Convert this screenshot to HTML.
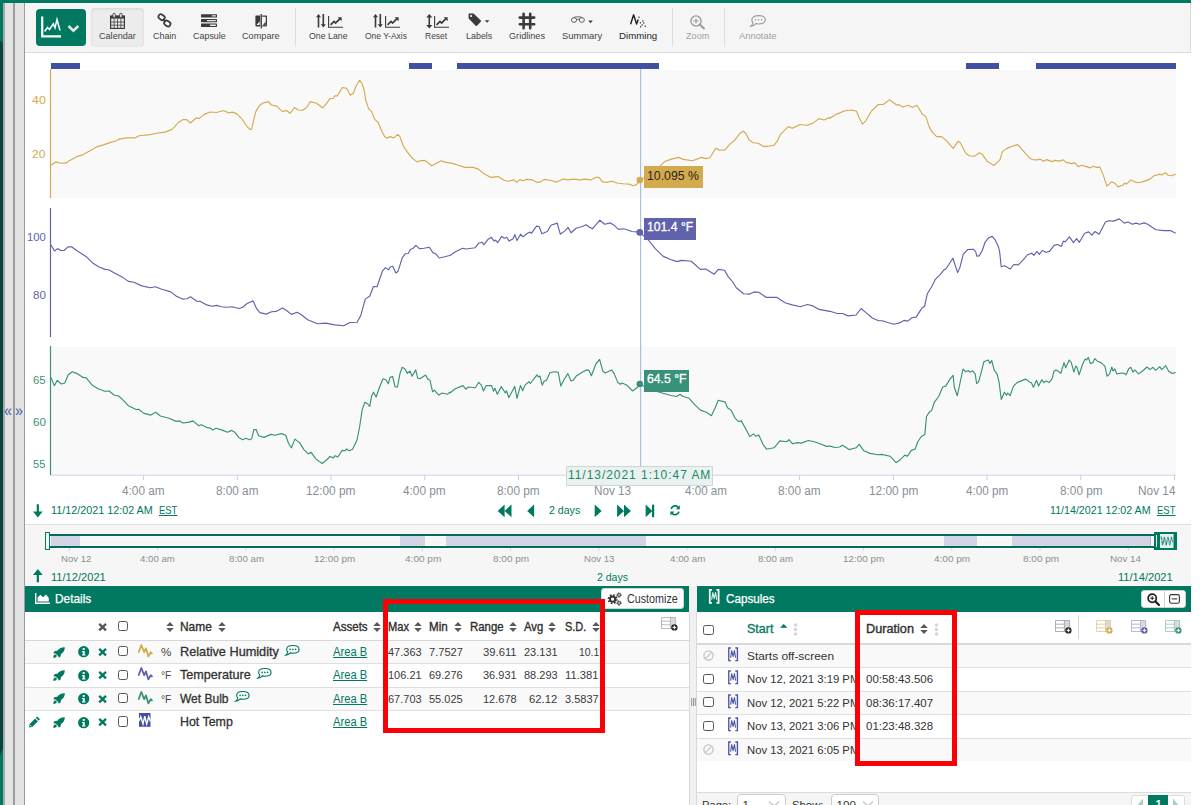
<!DOCTYPE html>
<html lang="en"><head><meta charset="utf-8"><title>Trend</title>
<style>
html,body{margin:0;padding:0;background:#fff;}
body{width:1201px;height:805px;position:relative;overflow:hidden;font-family:"Liberation Sans", sans-serif;}
#app div,#app svg,#app span.t{position:absolute;}
#app{position:absolute;left:0;top:0;width:1201px;height:805px;overflow:hidden;}
span.t{white-space:pre;line-height:1;transform-origin:0 0;display:block;}
svg{overflow:visible;}
</style></head><body><div id="app">
<div style="left:0px;top:0px;width:1191px;height:3px;background:#007960;"></div><div style="left:0px;top:0px;width:3px;height:805px;background:#007960;"></div><svg style="left:0;top:0" width="4" height="805"><path d="M0 41 Q3 41 3 45 L3 748 L0 756 Z" fill="#04473a"/></svg><div style="left:3px;top:3px;width:22px;height:802px;background:#e3e3e3;"></div><div style="left:3px;top:3px;width:1.5px;height:802px;background:#a8a8a8;"></div><div style="left:13px;top:3px;width:2px;height:802px;background:#9c9c9c;"></div><div style="left:23.8px;top:3px;width:1.2px;height:802px;background:#9c9c9c;"></div><div style="left:25px;top:3px;width:1166px;height:49px;background:#f5f5f5;border-bottom:1px solid #dcdcdc;border-right:1px solid #dcdcdc;box-sizing:border-box;height:50px;"></div><div style="left:36px;top:9px;width:50px;height:37px;background:#007960;border-radius:4px;"></div><svg style="left:41px;top:16px" width="42" height="24" viewBox="0 0 42 24"><path d="M1.2 0.5 V20.3 H20" fill="none" stroke="#fff" stroke-width="2.2"/><path d="M3.6 15.5 L6.5 11.5 L8.5 13.5 L12.3 7.8 L14 11.8 L16 3.6 L19 14.5" fill="none" stroke="#fff" stroke-width="1.5" stroke-linejoin="miter"/><path d="M27.5 10 L32.4 14.6 L37.3 10" fill="none" stroke="#e4e4e4" stroke-width="2.6"/></svg><div style="left:91px;top:8px;width:52.5px;height:38.5px;background:#ececec;border-radius:4px;box-shadow:inset 0 1px 3px rgba(0,0,0,.10);"></div><svg style="left:110px;top:13px" width="15" height="16" viewBox="0 0 15 16"><rect x="0.6" y="3" width="13.8" height="12.4" fill="none" stroke="#3a3a3a" stroke-width="1.2"/><rect x="0.6" y="3" width="13.8" height="2.6" fill="#3a3a3a"/><path d="M0.6 9H14.4M0.6 12.2H14.4M4.1 5.6V15.4M7.5 5.6V15.4M10.9 5.6V15.4" stroke="#3a3a3a" stroke-width="0.8" fill="none"/><rect x="2.9" y="0.3" width="2.4" height="4.2" rx="1.1" fill="#f0f0f0" stroke="#3a3a3a" stroke-width="0.9"/><rect x="9.7" y="0.3" width="2.4" height="4.2" rx="1.1" fill="#f0f0f0" stroke="#3a3a3a" stroke-width="0.9"/></svg><div style="left:294.5px;top:8px;width:1px;height:38.5px;background:#dedede;"></div><div style="left:671.6px;top:8px;width:1px;height:38.5px;background:#dedede;"></div><div style="left:724.4px;top:8px;width:1px;height:38.5px;background:#dedede;"></div><svg style="left:157px;top:13px" width="15" height="15" viewBox="0 0 15 15"><g fill="none" stroke="#3a3a3a" stroke-width="1.7"><rect x="-3.3" y="-2.4" width="6.6" height="4.8" rx="2.4" transform="translate(4.6 4.2) rotate(35)"/><rect x="-3.3" y="-2.4" width="6.6" height="4.8" rx="2.4" transform="translate(10.3 10.5) rotate(35)"/><path d="M6.3 5.9 L8.7 8.9"/></g></svg><svg style="left:201px;top:14px" width="16" height="13" viewBox="0 0 16 13"><g fill="#3a3a3a"><rect x="0" y="0.2" width="16" height="3.3" rx="0.6"/><rect x="0" y="4.9" width="16" height="3.3" rx="0.6"/><rect x="0" y="9.6" width="16" height="3.3" rx="0.6"/></g><g fill="#e8e8e8"><rect x="10.8" y="1.2" width="4.2" height="1.3" rx="0.6"/><rect x="5.8" y="5.9" width="9.2" height="1.3" rx="0.6"/><rect x="8.8" y="10.6" width="6.2" height="1.3" rx="0.6"/></g></svg><svg style="left:254.5px;top:14px" width="13" height="15" viewBox="0 0 13 15"><path d="M5.2 1.6 H1.2 Q0.4 1.6 0.4 2.4 V11.6 Q0.4 12.4 1.2 12.4 H5.2 Z" fill="#3a3a3a"/><path d="M1.6 11 L4.6 7.2 V11 Z" fill="#f5f5f5"/><path d="M7.3 1.6 H11.2 Q12 1.6 12 2.4 V11.6 Q12 12.4 11.2 12.4 H7.3 V11.2 H10.8 V2.8 H7.3 Z" fill="#3a3a3a"/><path d="M8 11 L10.6 7.6 V11 Z" fill="#3a3a3a"/><rect x="5.6" y="0" width="1.3" height="14.4" fill="#3a3a3a"/></svg><svg style="left:316.3px;top:14.4px" width="10" height="14" viewBox="0 0 10 14"><g fill="#3a3a3a"><path d="M2.5 0 L5 3.3 H3.3 V13.6 H1.7 V3.3 H0 Z"/><path d="M7.3 13.6 L4.8 10.3 H6.5 V0 H8.1 V10.3 H9.8 Z"/></g></svg><svg style="left:328px;top:15.8px" width="15" height="12" viewBox="0 0 15 12"><path d="M0.6 0 V11.2 H15" fill="none" stroke="#3a3a3a" stroke-width="1.1"/><path d="M2.6 8.8 L6 5.4 L7.6 7 L12 2.6" fill="none" stroke="#3a3a3a" stroke-width="1.7"/><path d="M9.6 1.2 H13.6 V5.2 Z" fill="#3a3a3a"/></svg><svg style="left:373.3px;top:14.4px" width="10" height="14" viewBox="0 0 10 14"><g fill="#3a3a3a"><path d="M2.5 0 L5 3.3 H3.3 V13.6 H1.7 V3.3 H0 Z"/><path d="M7.3 13.6 L4.8 10.3 H6.5 V0 H8.1 V10.3 H9.8 Z"/></g></svg><svg style="left:385.2px;top:15.8px" width="15" height="12" viewBox="0 0 15 12"><path d="M0.6 0 V11.2 H15" fill="none" stroke="#3a3a3a" stroke-width="1.1"/><path d="M2.6 8.8 L6 5.4 L7.6 7 L12 2.6" fill="none" stroke="#3a3a3a" stroke-width="1.7"/><path d="M9.6 1.2 H13.6 V5.2 Z" fill="#3a3a3a"/></svg><svg style="left:425.6px;top:14px" width="7" height="15" viewBox="0 0 7 15"><g fill="#3a3a3a"><path d="M3.3 0 L6.4 3.6 H4.1 V11 H6.4 L3.3 14.6 L0.2 11 H2.5 V3.6 H0.2 Z"/></g></svg><svg style="left:434.4px;top:15.8px" width="15" height="12" viewBox="0 0 15 12"><path d="M0.6 0 V11.2 H15" fill="none" stroke="#3a3a3a" stroke-width="1.1"/><path d="M2.6 8.8 L6 5.4 L7.6 7 L12 2.6" fill="none" stroke="#3a3a3a" stroke-width="1.7"/><path d="M9.6 1.2 H13.6 V5.2 Z" fill="#3a3a3a"/></svg><svg style="left:468px;top:13px" width="22" height="14" viewBox="0 0 22 14"><path d="M0.6 0.5 H5.6 L12.8 7.6 Q13.4 8.2 12.8 8.8 L8.9 12.7 Q8.3 13.3 7.7 12.7 L0.6 5.6 Z" fill="#3a3a3a"/><circle cx="3.1" cy="3" r="1.1" fill="#f5f5f5"/><path d="M16.8 7.2 H21.4 L19.1 9.8 Z" fill="#3a3a3a"/></svg><svg style="left:519.3px;top:13px" width="16" height="16" viewBox="0 0 16 16"><path d="M4.6 0.8 V15.2 M11.2 0.8 V15.2 M0.8 4.6 H15.2 M0.8 11.2 H15.2" stroke="#3a3a3a" stroke-width="2.6" stroke-linecap="round" fill="none"/></svg><svg style="left:571px;top:15.5px" width="23" height="8" viewBox="0 0 23 8"><g fill="none" stroke="#555" stroke-width="0.9"><ellipse cx="3" cy="4" rx="2.6" ry="2.3"/><ellipse cx="10.8" cy="4" rx="2.6" ry="2.3"/><path d="M2.6 1.7 Q4 0.5 6.9 0.9 Q9.8 0.5 11.2 1.7 M5.6 3.6 Q6.9 2.8 8.2 3.6"/></g><path d="M17.3 4.6 H21.8 L19.55 7.2 Z" fill="#3a3a3a"/></svg><svg style="left:629.6px;top:14px" width="17" height="14" viewBox="0 0 17 14"><path d="M0.6 10.2 L3.6 0.8 L6.6 10 L8.2 5.4" fill="none" stroke="#1e1e1e" stroke-width="1.4" stroke-linejoin="round"/><g fill="#1e1e1e"><rect x="8.4" y="2.6" width="1.2" height="1.2"/><rect x="9.8" y="8.2" width="1.2" height="1.2"/><rect x="11.6" y="10.4" width="1.2" height="1.2"/><rect x="13.2" y="8.4" width="1.2" height="1.2"/><rect x="10" y="12.2" width="1.2" height="1.2"/><rect x="14.6" y="11.6" width="1.2" height="1.2"/><rect x="12.2" y="6.4" width="1.2" height="1.2"/></g></svg><svg style="left:690.3px;top:14.7px" width="15" height="14" viewBox="0 0 15 14"><circle cx="6" cy="6" r="5.1" fill="none" stroke="#9a9a9a" stroke-width="1.4"/><path d="M6 3.4V8.6M3.4 6H8.6" stroke="#9a9a9a" stroke-width="1.1"/><path d="M9.8 9.6 L14 13.4" stroke="#9a9a9a" stroke-width="2" stroke-linecap="round"/></svg><svg style="left:749.9px;top:15px" width="16" height="12" viewBox="0 0 16 12"><path d="M8.6 0.6 C12.6 0.6 15.4 2.4 15.4 4.8 C15.4 7.2 12.6 9 8.6 9 C7.6 9 6.6 8.9 5.8 8.6 C4.6 10 2.6 11 0.8 11.2 C2 10.2 2.8 9 3 7.6 C2.2 6.8 1.8 5.8 1.8 4.8 C1.8 2.4 4.6 0.6 8.6 0.6 Z" fill="none" stroke="#9a9a9a" stroke-width="1.1"/><circle cx="5.6" cy="4.8" r="0.8" fill="#9a9a9a"/><circle cx="8.6" cy="4.8" r="0.8" fill="#9a9a9a"/><circle cx="11.6" cy="4.8" r="0.8" fill="#9a9a9a"/></svg><div style="left:51px;top:63px;width:28.700000000000003px;height:6px;background:#4051a3;"></div><div style="left:408.9px;top:63px;width:23.0px;height:6px;background:#4051a3;"></div><div style="left:456.9px;top:63px;width:201.89999999999998px;height:6px;background:#4051a3;"></div><div style="left:966.2px;top:63px;width:33.09999999999991px;height:6px;background:#4051a3;"></div><div style="left:1036.1px;top:63px;width:139.9000000000001px;height:6px;background:#4051a3;"></div><div style="left:51px;top:70px;width:1125px;height:128px;background:#f9f9f9;"></div><div style="left:51px;top:346.5px;width:1125px;height:128px;background:#f9f9f9;"></div><svg style="left:0;top:0" width="1201" height="530" viewBox="0 0 1201 530"><path d="M50 475.2 H1176" stroke="#c9d4ec" stroke-width="1" fill="none"/><path d="M143.6 475 V480 M237.3 475 V480 M331.0 475 V480 M424.8 475 V480 M518.5 475 V480 M612.2 475 V480 M705.9 475 V480 M799.6 475 V480 M893.4 475 V480 M987.1 475 V480 M1080.8 475 V480 M1174.5 475 V480 " stroke="#c3cfe8" stroke-width="1" fill="none"/><path d="M640.6 69 V466" stroke="#a9bfe0" stroke-width="1.2" fill="none"/><path d="M50.5 69 V198" stroke="#d4aa4f" stroke-width="1.2"/><path d="M50.5 208 V337" stroke="#6062ab" stroke-width="1.2"/><path d="M50.5 346 V475" stroke="#3a917a" stroke-width="1.2"/><polyline points="50.8,165.3 55.8,161.9 60.8,163.3 65.8,162.9 71.6,159.6 78.3,156.1 83.3,154.6 90.0,150.8 96.6,146.9 103.3,144.9 110.0,142.6 116.6,140.8 119.1,139.1 126.6,137.9 134.9,137.9 139.1,135.8 149.9,134.6 156.6,133.3 164.9,132.1 171.6,129.6 174.9,126.6 178.2,122.5 183.2,119.6 186.6,119.6 190.4,123.0 196.5,117.8 199.0,118.6 204.0,114.6 209.9,112.0 216.5,112.5 222.4,110.8 225.7,111.3 228.2,113.0 232.3,112.1 236.5,113.6 241.5,118.3 246.5,125.8 249.0,128.6 250.0,129.5 251.7,129.1 253.3,121.6 255.8,111.6 259.2,105.8 262.5,103.3 268.3,101.6 271.6,105.0 276.6,106.1 282.5,111.6 286.6,110.5 290.0,113.3 294.6,107.5 298.3,110.0 302.5,110.3 306.6,107.5 310.3,101.6 316.6,103.3 322.8,108.0 326.6,103.3 329.9,98.6 333.3,98.3 334.9,95.8 337.4,95.8 342.4,87.5 346.6,88.3 350.4,95.3 353.2,93.3 356.6,85.0 359.6,80.3 361.9,83.3 364.1,90.0 365.7,100.0 368.6,108.6 371.6,111.6 374.6,119.1 378.2,122.5 381.6,130.8 384.6,136.6 387.4,138.3 389.9,136.6 393.5,137.9 397.9,134.4 399.9,136.6 403.2,145.8 407.4,152.1 412.4,158.3 417.4,162.1 419.9,160.8 424.9,160.4 431.8,165.8 436.5,163.3 441.2,160.8 445.7,162.4 449.5,162.9 450.0,162.9 453.3,163.6 458.3,165.3 465.0,167.4 473.3,167.4 478.3,169.1 483.3,173.2 490.8,177.4 498.3,176.6 504.1,180.2 508.3,181.2 514.1,179.9 516.6,182.4 519.9,179.6 523.3,180.7 526.6,179.4 532.4,179.9 537.4,182.4 540.8,181.9 544.1,179.4 549.9,180.2 556.6,182.1 563.2,179.1 568.2,179.9 573.2,179.1 579.9,179.9 584.9,179.1 590.7,179.9 595.7,177.4 599.0,177.4 602.4,181.9 606.5,182.4 611.5,181.2 618.2,183.2 623.2,183.7 629.0,184.1 633.2,185.7 636.5,184.6 639.8,180.4 640.0,179.9 646.7,176.6 653.3,171.6 659.6,166.3 665.0,161.3 671.6,159.1 678.3,157.4 683.3,159.4 692.4,160.8 701.6,157.4 705.8,158.6 709.9,157.8 715.8,148.3 719.9,150.3 724.9,149.9 729.9,144.1 734.1,140.8 739.9,133.3 743.2,131.3 745.7,133.3 749.1,139.9 753.2,142.8 758.2,143.3 763.2,146.3 768.2,146.3 774.0,145.3 777.4,140.8 780.7,134.1 788.2,126.6 792.4,128.3 799.9,124.5 806.5,125.3 812.3,123.6 819.0,118.6 824.0,120.0 829.5,117.5 830.0,118.3 836.7,114.1 845.0,110.8 851.6,110.0 856.6,111.3 859.1,117.5 862.5,124.1 865.8,120.8 871.6,110.8 878.3,104.5 883.3,104.5 889.6,99.6 893.3,102.5 896.6,105.0 899.1,104.6 902.4,107.0 908.3,105.3 912.4,107.5 916.9,105.3 922.4,114.1 925.8,116.6 929.1,126.6 932.4,132.4 936.6,136.6 941.6,136.6 946.6,140.8 953.2,148.3 958.2,141.1 960.7,143.3 965.7,153.3 969.1,155.8 974.9,156.1 979.5,152.8 982.4,154.6 987.4,161.6 994.0,165.4 999.9,159.9 1002.4,151.6 1006.5,148.6 1012.3,146.3 1017.8,144.6 1023.2,150.8 1029.8,158.3 1032.5,159.6 1037.5,159.9 1040.0,159.1 1043.6,161.3 1046.6,159.6 1051.6,161.6 1055.0,160.4 1059.1,161.1 1063.3,159.9 1065.8,162.1 1071.6,163.6 1074.9,162.9 1078.3,166.6 1081.6,165.3 1086.6,166.6 1089.9,167.9 1093.3,166.3 1096.6,167.4 1099.9,167.1 1103.2,174.9 1106.9,186.1 1111.6,181.9 1114.9,183.2 1117.9,186.9 1122.4,185.2 1124.9,183.2 1126.6,184.1 1130.7,179.9 1134.1,181.6 1138.2,182.7 1143.2,181.6 1149.9,179.1 1154.0,175.7 1159.9,174.1 1161.5,174.9 1165.4,172.7 1168.2,175.2 1171.5,175.7 1175.7,174.1" fill="none" stroke="#d4aa4f" stroke-width="1.15" stroke-linejoin="round"/><polyline points="50.9,244.7 54.5,251.0 57.6,248.6 60.8,250.5 64.1,250.5 68.0,246.8 71.6,246.8 77.0,250.8 86.0,256.4 92.3,262.7 98.6,266.7 105.0,269.4 108.6,269.7 114.9,273.3 122.1,276.9 128.4,281.4 133.8,282.3 141.9,285.9 150.0,287.7 155.4,286.8 161.7,289.2 170.7,291.9 176.1,296.0 182.4,299.1 186.9,298.7 190.5,296.8 196.8,301.3 200.5,301.4 206.8,304.9 212.2,306.3 216.7,305.4 221.2,306.8 226.6,307.2 232.0,306.7 239.2,308.5 242.8,307.2 246.4,304.0 249.6,302.2 250.0,302.2 253.1,300.9 256.3,308.1 259.9,312.6 266.2,314.1 271.6,311.7 276.1,311.4 282.4,308.1 286.9,310.8 291.4,314.4 297.2,312.3 301.4,314.8 307.7,319.8 317.6,323.8 325.7,323.1 334.7,324.9 343.7,325.8 350.0,322.5 357.2,322.2 360.8,315.3 365.3,299.1 369.8,296.0 373.4,286.5 377.0,286.8 382.4,271.2 385.5,267.6 388.4,269.9 390.2,267.0 392.7,266.3 395.9,273.0 398.1,271.2 402.3,257.7 405.3,253.7 408.2,253.5 410.4,249.5 413.1,248.3 415.8,245.4 419.4,248.6 423.9,248.3 429.3,247.2 432.9,252.6 435.6,253.7 439.2,258.0 444.6,256.8 449.6,255.5 450.0,255.5 455.4,251.7 462.6,248.3 466.2,249.0 475.2,247.7 478.8,243.2 482.1,242.3 483.9,244.7 487.8,239.6 491.4,237.3 494.1,241.1 495.6,240.0 497.7,242.7 501.7,236.4 504.4,238.2 506.8,237.3 509.1,241.1 513.1,238.7 514.9,234.6 517.0,240.5 520.6,234.2 523.0,236.9 527.5,233.3 530.2,232.1 531.4,233.3 536.5,226.1 539.2,226.7 541.9,233.7 547.3,231.5 550.9,225.2 557.2,223.1 560.3,234.2 565.3,230.6 568.0,227.4 571.1,232.8 576.1,228.3 582.4,226.5 586.0,224.7 588.7,226.7 592.3,228.8 599.9,220.2 604.6,224.3 610.4,222.9 614.0,225.2 618.5,229.4 623.9,228.8 632.0,231.5 639.2,232.1 639.9,232.4 648.9,240.5 655.2,248.6 663.3,256.4 670.5,259.5 677.2,261.6 681.4,260.4 691.3,261.3 700.3,269.4 705.7,269.0 714.3,274.2 718.3,269.4 724.6,270.3 728.2,276.6 732.7,282.0 736.3,287.7 743.5,293.7 749.8,294.1 754.0,291.9 758.8,292.3 766.0,297.3 776.8,297.3 785.0,302.7 792.2,304.9 800.3,306.7 807.5,304.5 812.9,305.9 819.2,309.4 829.6,311.4 830.0,311.2 837.2,313.5 842.6,313.5 848.0,315.9 856.1,315.0 861.0,308.5 866.0,312.6 872.3,318.0 878.6,320.7 882.3,320.7 887.7,322.5 894.0,324.3 899.4,322.9 903.9,320.4 907.8,321.1 912.0,317.7 916.1,317.1 921.9,308.1 924.6,306.3 927.3,293.7 931.8,286.5 935.4,279.3 939.9,274.8 943.5,270.3 946.2,268.5 952.9,258.2 957.6,272.6 960.1,266.7 963.3,254.1 967.8,249.5 973.2,249.2 975.6,251.4 976.8,256.2 979.2,255.9 982.3,250.5 985.0,242.3 988.6,237.8 992.2,236.4 994.9,239.6 998.5,246.8 999.7,252.3 1001.2,266.7 1004.4,265.8 1007.5,267.6 1010.2,269.0 1013.8,264.5 1018.3,264.9 1022.8,260.4 1027.3,255.0 1030.0,253.7 1031.5,253.2 1033.9,255.3 1036.9,251.4 1039.3,254.4 1042.3,250.5 1045.9,252.3 1049.5,251.4 1054.1,245.4 1057.7,244.5 1061.3,246.5 1063.4,241.1 1065.2,241.8 1069.4,236.9 1073.5,242.7 1076.6,238.7 1079.3,242.3 1084.7,233.3 1088.6,231.9 1091.9,235.1 1095.0,231.5 1099.1,234.2 1105.4,222.0 1109.0,220.7 1113.5,221.1 1119.3,218.9 1124.3,223.1 1127.9,222.0 1132.4,224.3 1136.0,223.1 1139.6,224.3 1144.1,222.9 1147.7,224.3 1155.9,229.7 1164.0,230.6 1170.3,230.6 1175.7,233.3" fill="none" stroke="#6062ab" stroke-width="1.15" stroke-linejoin="round"/><polyline points="50.9,377.4 54.3,385.6 57.3,380.3 61.3,384.0 64.8,383.0 68.3,374.8 72.3,371.7 77.8,373.9 83.0,377.4 86.2,377.9 92.6,385.6 98.7,389.0 104.8,391.3 109.1,391.0 114.3,395.3 118.7,396.0 123.9,400.9 128.3,405.7 136.1,409.6 138.7,409.2 143.9,413.4 150.9,415.1 155.7,412.2 160.4,416.0 169.1,418.3 176.1,421.4 179.6,420.9 183.0,423.0 189.1,422.1 193.0,420.9 198.7,425.7 201.3,424.7 207.4,427.8 210.0,427.8 212.6,430.1 216.1,428.3 222.2,430.1 227.4,432.2 231.7,430.4 234.7,432.2 238.7,437.4 242.7,439.7 245.7,438.3 249.7,439.7 250.0,439.7 251.7,438.8 253.8,429.6 256.1,429.6 258.7,435.7 263.9,437.4 270.9,434.4 275.2,435.3 281.3,433.6 285.7,435.3 288.6,443.5 291.4,447.8 294.9,439.1 299.6,442.6 303.9,449.6 308.3,453.9 310.9,452.2 316.1,459.1 322.2,463.5 326.5,460.0 330.0,456.5 333.5,457.9 335.2,455.7 337.8,457.0 342.2,450.4 344.8,450.8 346.5,449.0 349.1,450.8 352.6,449.2 357.0,440.0 359.6,427.0 362.2,409.6 364.8,402.3 367.4,403.5 369.7,406.4 371.7,395.7 373.5,392.2 376.1,397.0 379.6,387.0 383.0,378.8 386.0,379.7 388.3,383.8 390.0,377.4 392.6,376.5 395.2,387.0 397.5,387.0 399.9,373.9 402.2,367.3 404.8,368.7 407.4,373.4 410.0,371.0 412.1,376.2 415.7,369.9 417.8,378.3 420.4,378.6 425.7,375.1 427.7,379.1 430.0,380.3 432.6,391.8 434.3,390.1 438.7,395.1 442.2,393.0 447.4,394.3 449.7,392.2 450.0,393.0 455.2,388.7 463.0,385.6 465.7,389.2 468.3,387.0 475.2,387.8 478.7,382.3 481.7,385.6 483.4,391.0 486.2,385.6 491.7,385.6 493.5,391.3 494.9,388.3 497.3,394.3 501.3,386.6 505.3,393.0 506.5,390.8 508.8,397.7 514.7,386.4 517.0,398.3 520.4,385.6 522.7,390.8 525.1,384.9 529.1,381.7 530.3,383.5 537.0,374.8 538.3,377.0 539.9,376.0 542.2,385.2 543.9,381.4 546.5,380.3 550.0,372.5 555.2,371.7 558.2,372.2 560.8,386.1 563.9,379.7 567.9,373.6 570.9,380.9 573.1,380.3 576.6,375.7 582.2,372.2 586.5,369.9 589.1,370.4 591.4,375.7 596.1,363.5 599.6,359.5 603.0,371.3 605.1,373.0 611.7,369.9 614.3,373.9 617.8,382.6 620.4,384.3 622.2,383.1 627.4,385.6 632.6,391.0 637.0,387.8 639.6,384.3 647.4,387.8 659.6,392.2 670.0,395.3 676.6,396.5 680.1,394.3 683.0,396.5 689.1,398.3 695.2,405.2 700.4,410.1 706.5,412.2 711.4,415.7 715.2,407.8 718.3,400.3 725.3,402.1 727.4,407.8 730.9,409.9 735.2,418.3 738.7,421.7 741.3,420.9 745.7,428.7 749.7,436.5 753.5,433.9 755.6,436.2 758.7,435.1 763.0,444.3 766.5,449.2 774.0,447.8 779.9,440.9 786.5,441.7 789.1,439.7 792.6,443.8 797.0,442.6 801.3,443.1 808.3,440.5 814.3,441.7 821.3,444.3 826.5,446.4 829.7,446.1 830.0,446.1 835.2,447.5 839.6,447.0 842.5,445.2 849.1,449.6 856.1,447.8 859.2,444.3 863.9,450.8 870.0,453.4 877.8,454.8 881.8,454.4 890.0,456.2 896.1,462.6 900.4,459.7 904.8,455.1 907.4,456.2 911.4,450.4 915.2,449.0 917.8,441.7 921.3,436.5 924.8,434.4 926.5,416.5 928.8,412.7 931.7,410.4 934.3,402.3 938.7,396.5 942.7,387.0 945.7,386.1 950.0,379.1 953.1,375.3 954.3,387.0 957.3,395.7 963.0,369.0 965.7,371.8 968.3,370.4 970.0,372.2 972.6,370.8 975.2,373.9 976.6,383.5 978.7,381.7 981.3,372.2 983.9,361.7 988.3,360.0 990.0,363.5 991.7,360.5 994.3,370.4 997.0,373.9 999.0,381.7 1001.3,399.5 1004.4,392.2 1006.5,395.3 1007.7,393.0 1010.0,395.7 1013.5,386.1 1017.0,382.6 1021.3,380.9 1025.7,379.1 1030.0,382.3 1031.3,382.6 1033.4,387.3 1036.5,380.3 1038.6,386.1 1041.7,379.7 1043.8,382.6 1046.6,380.9 1049.0,382.6 1052.2,378.6 1053.9,371.3 1056.0,369.9 1058.3,371.3 1060.9,373.4 1064.0,362.6 1065.7,367.8 1069.2,360.0 1071.3,362.6 1073.9,372.2 1075.7,366.1 1076.9,367.0 1079.1,374.8 1082.6,364.3 1085.2,359.1 1086.6,360.0 1088.3,357.4 1090.4,363.5 1093.0,362.6 1094.8,358.6 1097.4,361.2 1100.9,362.6 1104.9,366.1 1107.0,376.2 1109.6,373.9 1111.8,367.0 1113.0,371.0 1114.8,369.0 1116.9,373.9 1121.7,373.0 1124.3,373.4 1126.1,374.8 1128.7,368.7 1130.8,367.3 1133.0,372.2 1134.8,369.9 1138.6,373.9 1142.6,371.0 1147.0,367.0 1149.9,369.6 1153.0,367.3 1155.7,370.4 1159.7,366.6 1161.7,369.6 1165.7,365.7 1168.7,371.3 1172.2,373.4 1175.7,372.5" fill="none" stroke="#3a917a" stroke-width="1.15" stroke-linejoin="round"/><circle cx="639.8" cy="180.1" r="3.3" fill="#d4aa4f"/><circle cx="639.8" cy="232.4" r="3.3" fill="#6062ab"/><circle cx="639.8" cy="384" r="3.3" fill="#3a917a"/></svg><div style="left:644.2px;top:166.3px;width:58.6px;height:21.4px;background:#d4aa4f;"></div><div style="left:644.1px;top:218px;width:51.7px;height:21.6px;background:#6062ab;"></div><div style="left:643.9px;top:369.9px;width:44.9px;height:21.9px;background:#3a917a;"></div><div style="left:565.9px;top:465.8px;width:147.2px;height:20.2px;background:#e9f2f0;border:1px solid #cfd6d4;box-sizing:border-box;"></div><svg style="left:33.2px;top:504px" width="9.7" height="13.4" viewBox="0 0 9.7 13.4"><path d="M3.75 0.2 H5.95 V7.4 H9.7 L4.85 13.4 L0 7.4 H3.75 Z" fill="#007960"/></svg><svg style="left:497px;top:504px" width="190" height="14" viewBox="0 0 190 14"><g fill="#007960"><path d="M0.7 6.9 L7.6 0.6 V13.2 Z M7.6 6.9 L14.5 0.6 V13.2 Z"/><path d="M30.2 6.9 L37.1 0.6 V13.2 Z"/><path d="M104.6 6.9 L97.7 0.6 V13.2 Z"/><path d="M133.9 6.9 L127 0.6 V13.2 Z M127 6.9 L120.1 0.6 V13.2 Z"/><path d="M155.4 6.9 L148.6 0.6 V13.2 Z"/><rect x="155" y="0.6" width="2.2" height="12.6"/></g><g fill="none" stroke="#007960" stroke-width="1.7"><path d="M174.2 5 A4 4 0 0 1 181.4 3.6"/><path d="M182 7.6 A4 4 0 0 1 174.8 9"/></g><path d="M182.8 1.2 V5.2 H178.8 Z M173.4 11.4 V7.4 H177.4 Z" fill="#007960"/></svg><div style="left:25px;top:524px;width:1166px;height:63px;background:#f6f6f6;border-top:1px solid #dedede;box-sizing:border-box;"></div><div style="left:47px;top:533px;width:1108px;height:16px;background:#fff;"></div><div style="left:48px;top:536.8px;width:1107px;height:8.4px;background:#f6f6f6;"></div><div style="left:50.5px;top:536px;width:29.299999999999997px;height:10px;background:#d3d5e7;"></div><div style="left:400.1px;top:536px;width:24.5px;height:10px;background:#d3d5e7;"></div><div style="left:446.2px;top:536px;width:199.40000000000003px;height:10px;background:#d3d5e7;"></div><div style="left:943.9px;top:536px;width:32.89999999999998px;height:10px;background:#d3d5e7;"></div><div style="left:1012px;top:536px;width:137.5px;height:10px;background:#d3d5e7;"></div><div style="left:48px;top:534px;width:1107px;height:2px;background:#006e55;"></div><div style="left:48px;top:546px;width:1107px;height:2px;background:#006e55;"></div><div style="left:45.2px;top:532.3px;width:4.8px;height:17.4px;background:#f3f7f5;border:1.3px solid #007960;box-sizing:border-box;"></div><div style="left:1149.6px;top:535.6px;width:1.4px;height:10px;background:#b9b9c4;"></div><div style="left:1153.9px;top:532.3px;width:23.2px;height:17.4px;background:#007960;"></div><div style="left:1156.2px;top:535px;width:1px;height:12px;background:#e8f3ef;"></div><svg style="left:1160.3px;top:534px" width="13.5" height="14" viewBox="0 0 13.5 12" preserveAspectRatio="none"><rect width="13.5" height="12" fill="#e6f1ee"/><path d="M1 2 L2.6 9.6 L4.4 2.6 L6.2 9.8 L8 2.4 L9.8 9.6 L11.4 2.4 L12.6 7" fill="none" stroke="#2a9076" stroke-width="1.1"/><path d="M1.2 6 L3.2 3 L5.2 8 L7.2 4 L9.2 8.4 L11.2 4 L12.4 6.4" fill="none" stroke="#9fc3d8" stroke-width="0.7"/></svg><svg style="left:0;top:547px" width="1201" height="6"><path d="M69.4 1 V3.9 M157.6 1 V3.9 M245.9 1 V3.9 M334.1 1 V3.9 M422.4 1 V3.9 M510.6 1 V3.9 M598.8 1 V3.9 M687.1 1 V3.9 M775.3 1 V3.9 M863.6 1 V3.9 M951.8 1 V3.9 M1040.0 1 V3.9 M1128.3 1 V3.9 " stroke="#cdd4ee" stroke-width="1" fill="none"/></svg><svg style="left:33.2px;top:569.2px" width="9.7" height="13.4" viewBox="0 0 9.7 13.4"><path transform="rotate(180 4.85 6.7)" d="M3.75 0.2 H5.95 V7.4 H9.7 L4.85 13.4 L0 7.4 H3.75 Z" fill="#007960"/></svg><div style="left:25px;top:585px;width:1166px;height:1px;background:#fff;"></div><div style="left:25px;top:586px;width:664px;height:26px;background:#007960;"></div><div style="left:689px;top:586px;width:8px;height:219px;background:#f1f1f1;"></div><div style="left:688.5px;top:612px;width:1px;height:193px;background:#d9d9d9;"></div><div style="left:696px;top:612px;width:1px;height:193px;background:#d9d9d9;"></div><svg style="left:34.7px;top:593px" width="15" height="11" viewBox="0 0 15 11"><path d="M0.7 0 V10.2 H15" fill="none" stroke="#fff" stroke-width="1.4"/><path d="M2.6 8.6 V4.4 L5.4 1.8 L8 4.2 L11 1.6 L13.8 5 V8.6 Z" fill="#fff"/></svg><div style="left:601.3px;top:588.2px;width:82.7px;height:21px;background:#fff;border-radius:3px;border:1px solid #cfd8d5;box-sizing:border-box;"></div><svg style="left:607.5px;top:591.5px" width="14" height="14" viewBox="0 0 14 14"><g fill="none" stroke="#333" ><circle cx="4.6" cy="7.2" r="2.6" stroke-width="2"/><circle cx="4.6" cy="7.2" r="4.3" stroke-width="1.5" stroke-dasharray="1.7 1.68"/><circle cx="11" cy="3" r="1.4" stroke-width="1"/><circle cx="11" cy="3" r="2.3" stroke-width="0.9" stroke-dasharray="0.9 0.9"/><circle cx="11" cy="11" r="1.4" stroke-width="1"/><circle cx="11" cy="11" r="2.3" stroke-width="0.9" stroke-dasharray="0.9 0.9"/></g></svg><div style="left:25px;top:639.6px;width:664px;height:1.6px;background:#d6d8dc;"></div><div style="left:25px;top:641px;width:664px;height:22.6px;background:#f9f9f9;"></div><div style="left:25px;top:688px;width:664px;height:22.6px;background:#f9f9f9;"></div><div style="left:25px;top:663.3px;width:664px;height:1px;background:#dddfe3;"></div><div style="left:25px;top:686.9px;width:664px;height:1px;background:#dddfe3;"></div><div style="left:25px;top:710.4px;width:664px;height:1px;background:#dddfe3;"></div><svg style="left:98.2px;top:622.9px" width="9.2" height="8.2" viewBox="0 0 9.2 8.2"><path d="M1.2 0.9 L8 7.3 M8 0.9 L1.2 7.3" stroke="#555" stroke-width="2.3" fill="none"/></svg><div style="left:117.6px;top:621.2px;width:10.2px;height:10.2px;border:1.2px solid #555;border-radius:2.4px;background:#fff;box-sizing:border-box;"></div><svg style="left:166.3px;top:621.7px" width="8" height="10" viewBox="0 0 8 10"><path d="M4 0 L7.8 4 H0.2 Z M4 10 L7.8 6 H0.2 Z" fill="#5a5a5a"/></svg><svg style="left:217.5px;top:621.7px" width="8" height="10" viewBox="0 0 8 10"><path d="M4 0 L7.8 4 H0.2 Z M4 10 L7.8 6 H0.2 Z" fill="#5a5a5a"/></svg><svg style="left:372.7px;top:621.7px" width="8" height="10" viewBox="0 0 8 10"><path d="M4 0 L7.8 4 H0.2 Z M4 10 L7.8 6 H0.2 Z" fill="#5a5a5a"/></svg><svg style="left:414.4px;top:621.7px" width="8" height="10" viewBox="0 0 8 10"><path d="M4 0 L7.8 4 H0.2 Z M4 10 L7.8 6 H0.2 Z" fill="#5a5a5a"/></svg><svg style="left:453.6px;top:621.7px" width="8" height="10" viewBox="0 0 8 10"><path d="M4 0 L7.8 4 H0.2 Z M4 10 L7.8 6 H0.2 Z" fill="#5a5a5a"/></svg><svg style="left:509.2px;top:621.7px" width="8" height="10" viewBox="0 0 8 10"><path d="M4 0 L7.8 4 H0.2 Z M4 10 L7.8 6 H0.2 Z" fill="#5a5a5a"/></svg><svg style="left:548.4px;top:621.7px" width="8" height="10" viewBox="0 0 8 10"><path d="M4 0 L7.8 4 H0.2 Z M4 10 L7.8 6 H0.2 Z" fill="#5a5a5a"/></svg><svg style="left:591.6px;top:621.7px" width="8" height="10" viewBox="0 0 8 10"><path d="M4 0 L7.8 4 H0.2 Z M4 10 L7.8 6 H0.2 Z" fill="#5a5a5a"/></svg><svg style="left:661px;top:617.4px" width="17" height="14" viewBox="0 0 17 14"><rect x="9.4" y="0.5" width="5.2" height="11" fill="#d9d9d9"/><path d="M0.5 0.5 H14.6 V11.5 H0.5 Z M0.5 4.2 H9.4 M0.5 7.8 H9.4 M9.4 0.5 V11.5" fill="none" stroke="#a9a9b4" stroke-width="0.8"/><circle cx="13.4" cy="10.4" r="3.2" fill="#2a2a2a"/><path d="M13.4 8.6 V12.2 M11.6 10.4 H15.2" stroke="#fff" stroke-width="1"/></svg><svg style="left:53.1px;top:646.6px" width="12" height="11" viewBox="0 0 12 11"><path d="M11.8 0.2 C8.6 0 6 1.4 4.4 3.8 L1.8 4 L0.2 6.2 L2.6 6.4 L5.4 9.2 L5.6 10.8 L7.6 9.6 L8 7 C10.4 5.4 11.9 3.2 11.8 0.2 Z M1 8 C1.6 7.2 2.8 7.2 3.4 7.9 C4 8.6 3.8 9.6 3 10.2 C2.2 10.8 0.8 10.8 0.4 10.9 C0.4 10.2 0.4 8.8 1 8 Z" fill="#007960"/></svg><svg style="left:78px;top:646.3px" width="11.4" height="11.4" viewBox="0 0 11.4 11.4"><circle cx="5.7" cy="5.7" r="5.6" fill="#007960"/><rect x="4.7" y="2" width="2" height="1.9" fill="#fff"/><path d="M4 4.9 H6.7 V8.4 H7.5 V9.5 H4 V8.4 H4.8 V6 H4 Z" fill="#fff"/></svg><svg style="left:98.2px;top:648.1px" width="9.2" height="8.2" viewBox="0 0 9.2 8.2"><path d="M1.2 0.9 L8 7.3 M8 0.9 L1.2 7.3" stroke="#007960" stroke-width="2.3" fill="none"/></svg><div style="left:117.6px;top:646.1999999999999px;width:10.2px;height:10.2px;border:1.2px solid #555;border-radius:2.4px;background:#fff;box-sizing:border-box;"></div><svg style="left:137.6px;top:643.6999999999999px" width="15" height="13" viewBox="0 0 15 13"><path d="M0.5 8.8 L3.3 1 L6.2 8.2 L8 4.4 L10.4 12.4 L12.7 8.2 L14.5 9.8" fill="none" stroke="#d4aa4f" stroke-width="1.8" stroke-linejoin="round"/></svg><svg style="left:284.7px;top:644.5px" width="14.6" height="11" viewBox="0 0 16 12"><path d="M8.6 0.6 C12.6 0.6 15.4 2.4 15.4 4.8 C15.4 7.2 12.6 9 8.6 9 C7.6 9 6.6 8.9 5.8 8.6 C4.6 10 2.6 11 0.8 11.2 C2 10.2 2.8 9 3 7.6 C2.2 6.8 1.8 5.8 1.8 4.8 C1.8 2.4 4.6 0.6 8.6 0.6 Z" fill="none" stroke="#007960" stroke-width="1.2"/><circle cx="5.6" cy="4.8" r="0.9" fill="#007960"/><circle cx="8.6" cy="4.8" r="0.9" fill="#007960"/><circle cx="11.6" cy="4.8" r="0.9" fill="#007960"/></svg><svg style="left:53.1px;top:669.9000000000001px" width="12" height="11" viewBox="0 0 12 11"><path d="M11.8 0.2 C8.6 0 6 1.4 4.4 3.8 L1.8 4 L0.2 6.2 L2.6 6.4 L5.4 9.2 L5.6 10.8 L7.6 9.6 L8 7 C10.4 5.4 11.9 3.2 11.8 0.2 Z M1 8 C1.6 7.2 2.8 7.2 3.4 7.9 C4 8.6 3.8 9.6 3 10.2 C2.2 10.8 0.8 10.8 0.4 10.9 C0.4 10.2 0.4 8.8 1 8 Z" fill="#007960"/></svg><svg style="left:78px;top:669.6px" width="11.4" height="11.4" viewBox="0 0 11.4 11.4"><circle cx="5.7" cy="5.7" r="5.6" fill="#007960"/><rect x="4.7" y="2" width="2" height="1.9" fill="#fff"/><path d="M4 4.9 H6.7 V8.4 H7.5 V9.5 H4 V8.4 H4.8 V6 H4 Z" fill="#fff"/></svg><svg style="left:98.2px;top:671.4000000000001px" width="9.2" height="8.2" viewBox="0 0 9.2 8.2"><path d="M1.2 0.9 L8 7.3 M8 0.9 L1.2 7.3" stroke="#007960" stroke-width="2.3" fill="none"/></svg><div style="left:117.6px;top:669.5px;width:10.2px;height:10.2px;border:1.2px solid #555;border-radius:2.4px;background:#fff;box-sizing:border-box;"></div><svg style="left:137.6px;top:667.0px" width="15" height="13" viewBox="0 0 15 13"><path d="M0.5 8.8 L3.3 1 L6.2 8.2 L8 4.4 L10.4 12.4 L12.7 8.2 L14.5 9.8" fill="none" stroke="#6062ab" stroke-width="1.8" stroke-linejoin="round"/></svg><svg style="left:256.6px;top:667.8000000000001px" width="14.6" height="11" viewBox="0 0 16 12"><path d="M8.6 0.6 C12.6 0.6 15.4 2.4 15.4 4.8 C15.4 7.2 12.6 9 8.6 9 C7.6 9 6.6 8.9 5.8 8.6 C4.6 10 2.6 11 0.8 11.2 C2 10.2 2.8 9 3 7.6 C2.2 6.8 1.8 5.8 1.8 4.8 C1.8 2.4 4.6 0.6 8.6 0.6 Z" fill="none" stroke="#007960" stroke-width="1.2"/><circle cx="5.6" cy="4.8" r="0.9" fill="#007960"/><circle cx="8.6" cy="4.8" r="0.9" fill="#007960"/><circle cx="11.6" cy="4.8" r="0.9" fill="#007960"/></svg><svg style="left:53.1px;top:693.4000000000001px" width="12" height="11" viewBox="0 0 12 11"><path d="M11.8 0.2 C8.6 0 6 1.4 4.4 3.8 L1.8 4 L0.2 6.2 L2.6 6.4 L5.4 9.2 L5.6 10.8 L7.6 9.6 L8 7 C10.4 5.4 11.9 3.2 11.8 0.2 Z M1 8 C1.6 7.2 2.8 7.2 3.4 7.9 C4 8.6 3.8 9.6 3 10.2 C2.2 10.8 0.8 10.8 0.4 10.9 C0.4 10.2 0.4 8.8 1 8 Z" fill="#007960"/></svg><svg style="left:78px;top:693.1px" width="11.4" height="11.4" viewBox="0 0 11.4 11.4"><circle cx="5.7" cy="5.7" r="5.6" fill="#007960"/><rect x="4.7" y="2" width="2" height="1.9" fill="#fff"/><path d="M4 4.9 H6.7 V8.4 H7.5 V9.5 H4 V8.4 H4.8 V6 H4 Z" fill="#fff"/></svg><svg style="left:98.2px;top:694.9000000000001px" width="9.2" height="8.2" viewBox="0 0 9.2 8.2"><path d="M1.2 0.9 L8 7.3 M8 0.9 L1.2 7.3" stroke="#007960" stroke-width="2.3" fill="none"/></svg><div style="left:117.6px;top:693.0px;width:10.2px;height:10.2px;border:1.2px solid #555;border-radius:2.4px;background:#fff;box-sizing:border-box;"></div><svg style="left:137.6px;top:690.5px" width="15" height="13" viewBox="0 0 15 13"><path d="M0.5 8.8 L3.3 1 L6.2 8.2 L8 4.4 L10.4 12.4 L12.7 8.2 L14.5 9.8" fill="none" stroke="#3a917a" stroke-width="1.8" stroke-linejoin="round"/></svg><svg style="left:234.5px;top:691.3000000000001px" width="14.6" height="11" viewBox="0 0 16 12"><path d="M8.6 0.6 C12.6 0.6 15.4 2.4 15.4 4.8 C15.4 7.2 12.6 9 8.6 9 C7.6 9 6.6 8.9 5.8 8.6 C4.6 10 2.6 11 0.8 11.2 C2 10.2 2.8 9 3 7.6 C2.2 6.8 1.8 5.8 1.8 4.8 C1.8 2.4 4.6 0.6 8.6 0.6 Z" fill="none" stroke="#007960" stroke-width="1.2"/><circle cx="5.6" cy="4.8" r="0.9" fill="#007960"/><circle cx="8.6" cy="4.8" r="0.9" fill="#007960"/><circle cx="11.6" cy="4.8" r="0.9" fill="#007960"/></svg><svg style="left:28.9px;top:715.7px" width="11.4" height="11.6" viewBox="0 0 11.4 11.6"><path d="M8.2 0.4 L11 3.2 L9.6 4.6 L6.8 1.8 Z M6.1 2.5 L8.9 5.3 L3.2 11 L0.2 11.4 L0.5 8.2 Z" fill="#007960"/><path d="M1 9 L2.5 10.5" stroke="#fff" stroke-width="0.7"/></svg><svg style="left:53.1px;top:716.8000000000001px" width="12" height="11" viewBox="0 0 12 11"><path d="M11.8 0.2 C8.6 0 6 1.4 4.4 3.8 L1.8 4 L0.2 6.2 L2.6 6.4 L5.4 9.2 L5.6 10.8 L7.6 9.6 L8 7 C10.4 5.4 11.9 3.2 11.8 0.2 Z M1 8 C1.6 7.2 2.8 7.2 3.4 7.9 C4 8.6 3.8 9.6 3 10.2 C2.2 10.8 0.8 10.8 0.4 10.9 C0.4 10.2 0.4 8.8 1 8 Z" fill="#007960"/></svg><svg style="left:78px;top:716.5px" width="11.4" height="11.4" viewBox="0 0 11.4 11.4"><circle cx="5.7" cy="5.7" r="5.6" fill="#007960"/><rect x="4.7" y="2" width="2" height="1.9" fill="#fff"/><path d="M4 4.9 H6.7 V8.4 H7.5 V9.5 H4 V8.4 H4.8 V6 H4 Z" fill="#fff"/></svg><svg style="left:98.2px;top:718.3000000000001px" width="9.2" height="8.2" viewBox="0 0 9.2 8.2"><path d="M1.2 0.9 L8 7.3 M8 0.9 L1.2 7.3" stroke="#007960" stroke-width="2.3" fill="none"/></svg><div style="left:117.6px;top:716.4px;width:10.2px;height:10.2px;border:1.2px solid #555;border-radius:2.4px;background:#fff;box-sizing:border-box;"></div><svg style="left:139.1px;top:712.9px" width="11.5" height="13.8" viewBox="0 0 11.6 13" preserveAspectRatio="none"><rect width="11.6" height="13" fill="#4051a3"/><path d="M0 7.4 L1.8 3.6 L4 10.4 L5.8 3 L7.8 10.4 L9.8 3.6 L11.6 8" fill="none" stroke="#fff" stroke-width="1.4"/></svg><svg style="left:690.6px;top:697.6px" width="5" height="8"><path d="M0.7 0 V8 M2.5 0 V8 M4.3 0 V8" stroke="#8c8c8c" stroke-width="0.9"/></svg><div style="left:697px;top:586px;width:494px;height:26px;background:#007960;"></div><svg style="left:708.8px;top:589.4px" width="10.4" height="14.6" viewBox="0 0 10.6 14.6"><path d="M3 0.7 H0.8 V13.9 H3 M7.6 0.7 H9.8 V13.9 H7.6" fill="none" stroke="#fff" stroke-width="1.8"/><path d="M2.7 10.8 L3.9 3.4 L5.3 9.8 L6.7 3.4 L7.9 10.8" fill="none" stroke="#e4f3ee" stroke-width="1.1" stroke-linejoin="round"/></svg><div style="left:1141.3px;top:589.7px;width:44.4px;height:18.8px;background:#fff;border-radius:3px;border:1px solid #c9d3d0;box-sizing:border-box;"></div><div style="left:1164.4px;top:590.5px;width:1px;height:17.2px;background:#d2d2d2;"></div><svg style="left:1146.6px;top:593.2px" width="13" height="13" viewBox="0 0 13 13"><circle cx="5.2" cy="5.2" r="4.1" fill="none" stroke="#222" stroke-width="1.7"/><path d="M5.2 3.2V7.2M3.2 5.2H7.2" stroke="#222" stroke-width="1"/><path d="M8.4 8.4 L12 12" stroke="#222" stroke-width="2.2" stroke-linecap="round"/></svg><svg style="left:1169.4px;top:593.6px" width="11" height="10" viewBox="0 0 11 10"><rect x="0.6" y="0.6" width="9.8" height="8.6" rx="1.6" fill="none" stroke="#333" stroke-width="1.1"/><path d="M2.8 4.9 H8.2" stroke="#333" stroke-width="1.1"/></svg><div style="left:697px;top:643.4px;width:494px;height:1.6px;background:#d6d8dc;"></div><div style="left:697px;top:645.0px;width:494px;height:22.6px;background:#f9f9f9;"></div><div style="left:697px;top:691.8000000000001px;width:494px;height:22.6px;background:#f9f9f9;"></div><div style="left:697px;top:738.6px;width:494px;height:22.6px;background:#f9f9f9;"></div><div style="left:697px;top:667.3px;width:494px;height:1px;background:#dddfe3;"></div><div style="left:697px;top:690.8px;width:494px;height:1px;background:#dddfe3;"></div><div style="left:697px;top:714.2px;width:494px;height:1px;background:#dddfe3;"></div><div style="left:697px;top:737.7px;width:494px;height:1px;background:#dddfe3;"></div><div style="left:703.4px;top:624.8px;width:10.2px;height:10.2px;border:1.2px solid #555;border-radius:2.4px;background:#fff;box-sizing:border-box;"></div><svg style="left:780.2px;top:623.8px" width="7.4" height="3.8" viewBox="0 0 7.4 3.8"><path d="M3.7 0 L7.4 3.8 H0 Z" fill="#007960"/></svg><svg style="left:793.2px;top:622.9px" width="5" height="13" viewBox="0 0 5 13"><g fill="#d4d4d4"><circle cx="2.5" cy="2" r="1.7"/><circle cx="2.5" cy="6.5" r="1.7"/><circle cx="2.5" cy="11" r="1.7"/></g></svg><svg style="left:919.8px;top:623.6px" width="8" height="10" viewBox="0 0 8 10"><path d="M4 0 L7.8 4 H0.2 Z M4 10 L7.8 6 H0.2 Z" fill="#5a5a5a"/></svg><svg style="left:934px;top:622.9px" width="5" height="13" viewBox="0 0 5 13"><g fill="#d4d4d4"><circle cx="2.5" cy="2" r="1.7"/><circle cx="2.5" cy="6.5" r="1.7"/><circle cx="2.5" cy="11" r="1.7"/></g></svg><svg style="left:1055px;top:620.2px" width="17" height="14" viewBox="0 0 17 14"><rect x="9.4" y="0.5" width="5.2" height="11" fill="#d9d9d9"/><path d="M0.5 0.5 H14.6 V11.5 H0.5 Z M0.5 4.2 H9.4 M0.5 7.8 H9.4 M9.4 0.5 V11.5" fill="none" stroke="#9a9aa4" stroke-width="0.8"/><circle cx="13.4" cy="10.4" r="3.2" fill="#2a2a2a"/><path d="M13.4 8.6 V12.2 M11.6 10.4 H15.2" stroke="#fff" stroke-width="1"/></svg><div style="left:1078.2px;top:615.3px;width:1px;height:24.2px;background:#d9d9d9;"></div><svg style="left:1096px;top:620.2px" width="17" height="14" viewBox="0 0 17 14"><rect x="9.4" y="0.5" width="5.2" height="11" fill="#d9d9d9"/><path d="M0.5 0.5 H14.6 V11.5 H0.5 Z M0.5 4.2 H9.4 M0.5 7.8 H9.4 M9.4 0.5 V11.5" fill="none" stroke="#e0c690" stroke-width="0.8"/><circle cx="13.4" cy="10.4" r="3.2" fill="#d4aa4f"/><path d="M13.4 8.6 V12.2 M11.6 10.4 H15.2" stroke="#fff" stroke-width="1"/></svg><svg style="left:1131px;top:620.2px" width="17" height="14" viewBox="0 0 17 14"><rect x="9.4" y="0.5" width="5.2" height="11" fill="#d9d9d9"/><path d="M0.5 0.5 H14.6 V11.5 H0.5 Z M0.5 4.2 H9.4 M0.5 7.8 H9.4 M9.4 0.5 V11.5" fill="none" stroke="#a5a6d0" stroke-width="0.8"/><circle cx="13.4" cy="10.4" r="3.2" fill="#6062ab"/><path d="M13.4 8.6 V12.2 M11.6 10.4 H15.2" stroke="#fff" stroke-width="1"/></svg><svg style="left:1164.8px;top:620.2px" width="17" height="14" viewBox="0 0 17 14"><rect x="9.4" y="0.5" width="5.2" height="11" fill="#d9d9d9"/><path d="M0.5 0.5 H14.6 V11.5 H0.5 Z M0.5 4.2 H9.4 M0.5 7.8 H9.4 M9.4 0.5 V11.5" fill="none" stroke="#94c4b6" stroke-width="0.8"/><circle cx="13.4" cy="10.4" r="3.2" fill="#3a917a"/><path d="M13.4 8.6 V12.2 M11.6 10.4 H15.2" stroke="#fff" stroke-width="1"/></svg><svg style="left:702.7px;top:650.4px" width="11" height="11" viewBox="0 0 11 11"><circle cx="5.5" cy="5.5" r="4.6" fill="none" stroke="#c4c4c4" stroke-width="1.3"/><path d="M2.4 8.6 L8.6 2.4" stroke="#c4c4c4" stroke-width="1.3"/></svg><svg style="left:727.8px;top:646.9px" width="10.2" height="14.6" viewBox="0 0 10.6 14.6"><path d="M3 0.7 H0.8 V13.9 H3 M7.6 0.7 H9.8 V13.9 H7.6" fill="none" stroke="#4a55a4" stroke-width="1.4"/><path d="M2.7 10.8 L3.9 3.4 L5.3 9.8 L6.7 3.4 L7.9 10.8" fill="none" stroke="#4a55a4" stroke-width="1.1" stroke-linejoin="round"/></svg><div style="left:703.4px;top:673.8000000000001px;width:10.2px;height:10.2px;border:1.2px solid #555;border-radius:2.4px;background:#fff;box-sizing:border-box;"></div><svg style="left:727.8px;top:670.3000000000001px" width="10.2" height="14.6" viewBox="0 0 10.6 14.6"><path d="M3 0.7 H0.8 V13.9 H3 M7.6 0.7 H9.8 V13.9 H7.6" fill="none" stroke="#4a55a4" stroke-width="1.4"/><path d="M2.7 10.8 L3.9 3.4 L5.3 9.8 L6.7 3.4 L7.9 10.8" fill="none" stroke="#4a55a4" stroke-width="1.1" stroke-linejoin="round"/></svg><div style="left:703.4px;top:697.2px;width:10.2px;height:10.2px;border:1.2px solid #555;border-radius:2.4px;background:#fff;box-sizing:border-box;"></div><svg style="left:727.8px;top:693.7px" width="10.2" height="14.6" viewBox="0 0 10.6 14.6"><path d="M3 0.7 H0.8 V13.9 H3 M7.6 0.7 H9.8 V13.9 H7.6" fill="none" stroke="#4a55a4" stroke-width="1.4"/><path d="M2.7 10.8 L3.9 3.4 L5.3 9.8 L6.7 3.4 L7.9 10.8" fill="none" stroke="#4a55a4" stroke-width="1.1" stroke-linejoin="round"/></svg><div style="left:703.4px;top:720.6px;width:10.2px;height:10.2px;border:1.2px solid #555;border-radius:2.4px;background:#fff;box-sizing:border-box;"></div><svg style="left:727.8px;top:717.1px" width="10.2" height="14.6" viewBox="0 0 10.6 14.6"><path d="M3 0.7 H0.8 V13.9 H3 M7.6 0.7 H9.8 V13.9 H7.6" fill="none" stroke="#4a55a4" stroke-width="1.4"/><path d="M2.7 10.8 L3.9 3.4 L5.3 9.8 L6.7 3.4 L7.9 10.8" fill="none" stroke="#4a55a4" stroke-width="1.1" stroke-linejoin="round"/></svg><svg style="left:702.7px;top:744.0px" width="11" height="11" viewBox="0 0 11 11"><circle cx="5.5" cy="5.5" r="4.6" fill="none" stroke="#c4c4c4" stroke-width="1.3"/><path d="M2.4 8.6 L8.6 2.4" stroke="#c4c4c4" stroke-width="1.3"/></svg><svg style="left:727.8px;top:740.5px" width="10.2" height="14.6" viewBox="0 0 10.6 14.6"><path d="M3 0.7 H0.8 V13.9 H3 M7.6 0.7 H9.8 V13.9 H7.6" fill="none" stroke="#4a55a4" stroke-width="1.4"/><path d="M2.7 10.8 L3.9 3.4 L5.3 9.8 L6.7 3.4 L7.9 10.8" fill="none" stroke="#4a55a4" stroke-width="1.1" stroke-linejoin="round"/></svg><div style="left:697px;top:791.6px;width:494px;height:14px;background:#f5f5f5;border-top:1px solid #dcdcdc;box-sizing:border-box;"></div><div style="left:736.5px;top:794.3px;width:49.1px;height:20px;background:#fff;border:1px solid #ccc;border-radius:4px;box-sizing:border-box;"></div><svg style="left:768px;top:800px" width="12" height="6"><path d="M1 1.5 L6 6 L11 1.5" fill="none" stroke="#ccc" stroke-width="1.6"/></svg><div style="left:830.5px;top:794.3px;width:48.9px;height:20px;background:#fff;border:1px solid #ccc;border-radius:4px;box-sizing:border-box;"></div><svg style="left:862px;top:800px" width="12" height="6"><path d="M1 1.5 L6 6 L11 1.5" fill="none" stroke="#ccc" stroke-width="1.6"/></svg><div style="left:1131px;top:794.8px;width:54px;height:16px;background:#fff;border:1px solid #ddd;border-radius:3px;box-sizing:border-box;"></div><div style="left:1148.3px;top:794.8px;width:19.7px;height:16px;background:#007960;"></div><svg style="left:1136px;top:798px" width="8" height="8"><path d="M7 0.5 V8 H0.8 Z" fill="#a8cfc4"/></svg><svg style="left:1172px;top:798px" width="8" height="8"><path d="M1 0.5 V8 H7.2 Z" fill="#a8cfc4"/></svg><div style="left:382.6px;top:598.5px;width:222.8px;height:134.1px;border:5px solid #fb0007;box-sizing:border-box;z-index:5;"></div><div style="left:854.9px;top:610.3px;width:101.9px;height:156.2px;border:5px solid #fb0007;box-sizing:border-box;z-index:5;"></div>
<span class="t" style="left:4.30px;top:403.00px;font-size:16px;color:#4a5fa8;transform:scaleX(0.8982);">«</span>
<span class="t" style="left:15.20px;top:403.00px;font-size:16px;color:#4a5fa8;transform:scaleX(0.8982);">»</span>
<span class="t" style="left:99.00px;top:31.00px;font-size:9.4px;color:#444;transform:scaleX(0.9699);">Calendar</span>
<span class="t" style="left:152.80px;top:31.00px;font-size:9.4px;color:#444;transform:scaleX(0.9510);">Chain</span>
<span class="t" style="left:192.90px;top:31.00px;font-size:9.4px;color:#444;transform:scaleX(0.9533);">Capsule</span>
<span class="t" style="left:242.30px;top:31.00px;font-size:9.4px;color:#444;transform:scaleX(0.9750);">Compare</span>
<span class="t" style="left:309.40px;top:31.00px;font-size:9.4px;color:#444;transform:scaleX(0.9372);">One Lane</span>
<span class="t" style="left:365.00px;top:31.00px;font-size:9.4px;color:#444;transform:scaleX(0.9032);">One Y-Axis</span>
<span class="t" style="left:425.30px;top:31.00px;font-size:9.4px;color:#444;transform:scaleX(0.9061);">Reset</span>
<span class="t" style="left:465.70px;top:31.00px;font-size:9.4px;color:#444;transform:scaleX(0.9515);">Labels</span>
<span class="t" style="left:509.30px;top:31.00px;font-size:9.4px;color:#444;transform:scaleX(0.9730);">Gridlines</span>
<span class="t" style="left:562.20px;top:31.00px;font-size:9.4px;color:#444;transform:scaleX(0.9998);">Summary</span>
<span class="t" style="left:618.80px;top:31.00px;font-size:9.4px;color:#1e1e1e;transform:scaleX(1.0329);">Dimming</span>
<span class="t" style="left:686.30px;top:31.00px;font-size:9.4px;color:#a0a0a0;transform:scaleX(0.9721);">Zoom</span>
<span class="t" style="left:739.00px;top:31.00px;font-size:9.4px;color:#a0a0a0;transform:scaleX(0.9988);">Annotate</span>
<span class="t" style="left:32.10px;top:95.00px;font-size:10.6px;color:#d4aa4f;transform:scaleX(1.1698);">40</span>
<span class="t" style="left:32.40px;top:149.00px;font-size:10.6px;color:#d4aa4f;transform:scaleX(1.1274);">20</span>
<span class="t" style="left:26.90px;top:232.00px;font-size:10.6px;color:#6062ab;transform:scaleX(1.0629);">100</span>
<span class="t" style="left:32.60px;top:290.00px;font-size:10.6px;color:#6062ab;transform:scaleX(1.0935);">80</span>
<span class="t" style="left:32.60px;top:375.00px;font-size:10.6px;color:#3a917a;transform:scaleX(1.0766);">65</span>
<span class="t" style="left:32.60px;top:417.00px;font-size:10.6px;color:#3a917a;transform:scaleX(1.0935);">60</span>
<span class="t" style="left:33.00px;top:459.00px;font-size:10.6px;color:#3a917a;transform:scaleX(1.0426);">55</span>
<span class="t" style="left:647.40px;top:170.00px;font-size:12px;color:#2a2415;transform:scaleX(1.0233);">10.095 %</span>
<span class="t" style="left:647.40px;top:221.00px;font-size:12px;color:#fff;transform:scaleX(1.0154);-webkit-text-stroke:0.3px #fff;">101.4 °F</span>
<span class="t" style="left:647.40px;top:373.00px;font-size:12px;color:#fff;transform:scaleX(1.0199);-webkit-text-stroke:0.3px #fff;">64.5 °F</span>
<span class="t" style="left:122.40px;top:485.00px;font-size:12px;color:#888e98;transform:scaleX(0.9825);">4:00 am</span>
<span class="t" style="left:215.90px;top:485.00px;font-size:12px;color:#888e98;transform:scaleX(0.9779);">8:00 am</span>
<span class="t" style="left:306.34px;top:485.00px;font-size:12px;color:#888e98;transform:scaleX(0.9871);">12:00 pm</span>
<span class="t" style="left:403.46px;top:485.00px;font-size:12px;color:#888e98;transform:scaleX(0.9825);">4:00 pm</span>
<span class="t" style="left:497.30px;top:485.00px;font-size:12px;color:#888e98;transform:scaleX(0.9848);">8:00 pm</span>
<span class="t" style="left:594.00px;top:485.00px;font-size:12px;color:#888e98;transform:scaleX(0.9729);">Nov 13</span>
<span class="t" style="left:685.20px;top:485.00px;font-size:12px;color:#888e98;transform:scaleX(0.9686);">4:00 am</span>
<span class="t" style="left:778.34px;top:485.00px;font-size:12px;color:#888e98;transform:scaleX(0.9825);">8:00 am</span>
<span class="t" style="left:868.66px;top:485.00px;font-size:12px;color:#888e98;transform:scaleX(0.9871);">12:00 pm</span>
<span class="t" style="left:966.40px;top:485.00px;font-size:12px;color:#888e98;transform:scaleX(0.9733);">4:00 pm</span>
<span class="t" style="left:1059.70px;top:485.00px;font-size:12px;color:#888e98;transform:scaleX(0.9825);">8:00 pm</span>
<span class="t" style="left:1138.00px;top:485.00px;font-size:12px;color:#888e98;transform:scaleX(0.9860);">Nov 14</span>
<span class="t" style="left:568.30px;top:469.00px;font-size:12px;color:#1b8768;letter-spacing:1px;transform:scaleX(0.9936);">11/13/2021 1:10:47 AM</span>
<span class="t" style="left:51.40px;top:505.00px;font-size:10.6px;color:#007960;transform:scaleX(1.0176);">11/12/2021 12:02 AM</span>
<span class="t" style="left:159.20px;top:505.00px;font-size:10.6px;color:#007960;transform:scaleX(0.8928);text-decoration:underline;">EST</span>
<span class="t" style="left:1050.40px;top:505.00px;font-size:10.6px;color:#007960;transform:scaleX(1.0066);">11/14/2021 12:02 AM</span>
<span class="t" style="left:1157.00px;top:505.00px;font-size:10.6px;color:#007960;transform:scaleX(0.8976);text-decoration:underline;">EST</span>
<span class="t" style="left:548.80px;top:505.00px;font-size:10.6px;color:#007960;transform:scaleX(0.9994);">2 days</span>
<span class="t" style="left:60.70px;top:554.00px;font-size:9.6px;color:#8e8e8e;transform:scaleX(0.9965);">Nov 12</span>
<span class="t" style="left:140.20px;top:554.00px;font-size:9.6px;color:#8e8e8e;transform:scaleX(1.0037);">4:00 am</span>
<span class="t" style="left:228.50px;top:554.00px;font-size:9.6px;color:#8e8e8e;transform:scaleX(1.0095);">8:00 am</span>
<span class="t" style="left:314.00px;top:554.00px;font-size:9.6px;color:#8e8e8e;transform:scaleX(1.0271);">12:00 pm</span>
<span class="t" style="left:404.50px;top:554.00px;font-size:9.6px;color:#8e8e8e;transform:scaleX(1.0470);">4:00 pm</span>
<span class="t" style="left:492.80px;top:554.00px;font-size:9.6px;color:#8e8e8e;transform:scaleX(1.0412);">8:00 pm</span>
<span class="t" style="left:584.40px;top:554.00px;font-size:9.6px;color:#8e8e8e;transform:scaleX(0.9965);">Nov 13</span>
<span class="t" style="left:669.90px;top:554.00px;font-size:9.6px;color:#8e8e8e;transform:scaleX(1.0181);">4:00 am</span>
<span class="t" style="left:758.20px;top:554.00px;font-size:9.6px;color:#8e8e8e;transform:scaleX(1.0095);">8:00 am</span>
<span class="t" style="left:843.01px;top:554.00px;font-size:9.6px;color:#8e8e8e;transform:scaleX(1.0271);">12:00 pm</span>
<span class="t" style="left:933.70px;top:554.00px;font-size:9.6px;color:#8e8e8e;transform:scaleX(1.0441);">4:00 pm</span>
<span class="t" style="left:1022.90px;top:554.00px;font-size:9.6px;color:#8e8e8e;transform:scaleX(1.0412);">8:00 pm</span>
<span class="t" style="left:1109.90px;top:554.00px;font-size:9.6px;color:#8e8e8e;transform:scaleX(1.0195);">Nov 14</span>
<span class="t" style="left:51.40px;top:572.00px;font-size:10.6px;color:#007960;transform:scaleX(1.0491);">11/12/2021</span>
<span class="t" style="left:596.70px;top:572.00px;font-size:10.6px;color:#007960;transform:scaleX(0.9930);">2 days</span>
<span class="t" style="left:1117.50px;top:572.00px;font-size:10.6px;color:#007960;transform:scaleX(1.0472);">11/14/2021</span>
<span class="t" style="left:55.30px;top:593.00px;font-size:12.4px;color:#fff;transform:scaleX(0.9558);-webkit-text-stroke:0.25px #fff;">Details</span>
<span class="t" style="left:626.60px;top:593.00px;font-size:12px;color:#333;transform:scaleX(0.8961);">Customize</span>
<span class="t" style="left:180.40px;top:621.00px;font-size:12.2px;color:#2f2f2f;transform:scaleX(0.9780);-webkit-text-stroke:0.35px #2f2f2f;">Name</span>
<span class="t" style="left:333.20px;top:621.00px;font-size:12.2px;color:#2f2f2f;transform:scaleX(0.9459);-webkit-text-stroke:0.35px #2f2f2f;">Assets</span>
<span class="t" style="left:387.50px;top:621.00px;font-size:12.2px;color:#2f2f2f;transform:scaleX(0.9118);-webkit-text-stroke:0.35px #2f2f2f;">Max</span>
<span class="t" style="left:428.70px;top:621.00px;font-size:12.2px;color:#2f2f2f;transform:scaleX(0.9572);-webkit-text-stroke:0.35px #2f2f2f;">Min</span>
<span class="t" style="left:470.20px;top:621.00px;font-size:12.2px;color:#2f2f2f;transform:scaleX(0.9354);-webkit-text-stroke:0.35px #2f2f2f;">Range</span>
<span class="t" style="left:523.50px;top:621.00px;font-size:12.2px;color:#2f2f2f;transform:scaleX(0.9239);-webkit-text-stroke:0.35px #2f2f2f;">Avg</span>
<span class="t" style="left:565.20px;top:621.00px;font-size:12.2px;color:#2f2f2f;transform:scaleX(0.8986);-webkit-text-stroke:0.35px #2f2f2f;">S.D.</span>
<span class="t" style="left:161.40px;top:647.00px;font-size:11.4px;color:#444;transform:scaleX(1.0256);">%</span>
<span class="t" style="left:180.40px;top:646.00px;font-size:12.2px;color:#333;transform:scaleX(1.0429);-webkit-text-stroke:0.3px #333;">Relative Humidity</span>
<span class="t" style="left:333.20px;top:646.00px;font-size:12px;color:#007960;transform:scaleX(0.9322);text-decoration:underline;">Area B</span>
<span class="t" style="left:387.50px;top:647.00px;font-size:11.2px;color:#3a3a3a;transform:scaleX(0.9819);">47.363</span>
<span class="t" style="left:428.70px;top:647.00px;font-size:11.2px;color:#3a3a3a;transform:scaleX(0.9907);">7.7527</span>
<span class="t" style="left:482.70px;top:647.00px;font-size:11.2px;color:#3a3a3a;transform:scaleX(1.0063);">39.611</span>
<span class="t" style="left:524.10px;top:647.00px;font-size:11.2px;color:#3a3a3a;transform:scaleX(0.9819);">23.131</span>
<span class="t" style="left:578.50px;top:647.00px;font-size:11.2px;color:#3a3a3a;transform:scaleX(0.9320);">10.1</span>
<span class="t" style="left:161.40px;top:670.00px;font-size:11.4px;color:#444;transform:scaleX(0.9031);">°F</span>
<span class="t" style="left:180.40px;top:669.00px;font-size:12.2px;color:#333;transform:scaleX(1.0348);-webkit-text-stroke:0.3px #333;">Temperature</span>
<span class="t" style="left:333.20px;top:669.00px;font-size:12px;color:#007960;transform:scaleX(0.9322);text-decoration:underline;">Area B</span>
<span class="t" style="left:387.50px;top:670.00px;font-size:11.2px;color:#3a3a3a;transform:scaleX(0.9819);">106.21</span>
<span class="t" style="left:428.70px;top:670.00px;font-size:11.2px;color:#3a3a3a;transform:scaleX(0.9819);">69.276</span>
<span class="t" style="left:482.70px;top:670.00px;font-size:11.2px;color:#3a3a3a;transform:scaleX(0.9819);">36.931</span>
<span class="t" style="left:524.10px;top:670.00px;font-size:11.2px;color:#3a3a3a;transform:scaleX(0.9819);">88.293</span>
<span class="t" style="left:565.20px;top:670.00px;font-size:11.2px;color:#3a3a3a;transform:scaleX(1.0063);">11.381</span>
<span class="t" style="left:161.40px;top:694.00px;font-size:11.4px;color:#444;transform:scaleX(0.9031);">°F</span>
<span class="t" style="left:180.40px;top:693.00px;font-size:12.2px;color:#333;transform:scaleX(0.9851);-webkit-text-stroke:0.3px #333;">Wet Bulb</span>
<span class="t" style="left:333.20px;top:693.00px;font-size:12px;color:#007960;transform:scaleX(0.9322);text-decoration:underline;">Area B</span>
<span class="t" style="left:387.50px;top:694.00px;font-size:11.2px;color:#3a3a3a;transform:scaleX(0.9819);">67.703</span>
<span class="t" style="left:428.70px;top:694.00px;font-size:11.2px;color:#3a3a3a;transform:scaleX(0.9819);">55.025</span>
<span class="t" style="left:482.70px;top:694.00px;font-size:11.2px;color:#3a3a3a;transform:scaleX(0.9819);">12.678</span>
<span class="t" style="left:529.40px;top:694.00px;font-size:11.2px;color:#3a3a3a;transform:scaleX(1.0107);">62.12</span>
<span class="t" style="left:565.20px;top:694.00px;font-size:11.2px;color:#3a3a3a;transform:scaleX(0.9819);">3.5837</span>
<span class="t" style="left:180.40px;top:716.00px;font-size:12.2px;color:#333;transform:scaleX(1.0166);-webkit-text-stroke:0.3px #333;">Hot Temp</span>
<span class="t" style="left:333.20px;top:716.00px;font-size:12px;color:#007960;transform:scaleX(0.9322);text-decoration:underline;">Area B</span>
<span class="t" style="left:726.10px;top:593.00px;font-size:12.3px;color:#fff;transform:scaleX(0.9500);-webkit-text-stroke:0.25px #fff;">Capsules</span>
<span class="t" style="left:747.30px;top:623.00px;font-size:12.2px;color:#0a7c62;transform:scaleX(1.0252);-webkit-text-stroke:0.35px #0a7c62;">Start</span>
<span class="t" style="left:866.40px;top:623.00px;font-size:12.2px;color:#2f2f2f;transform:scaleX(1.0417);-webkit-text-stroke:0.35px #2f2f2f;">Duration</span>
<span class="t" style="left:747.30px;top:650.00px;font-size:11.6px;color:#333;transform:scaleX(1.0266);">Starts off-screen</span>
<span class="t" style="left:747.30px;top:673.00px;font-size:11.6px;color:#333;transform:scaleX(0.9733);clip-path:inset(0 4.6px 0 0);">Nov 12, 2021 3:19 PM</span>
<span class="t" style="left:866.40px;top:674.00px;font-size:11.4px;color:#333;transform:scaleX(1.0088);">00:58:43.506</span>
<span class="t" style="left:747.30px;top:697.00px;font-size:11.6px;color:#333;transform:scaleX(0.9733);clip-path:inset(0 4.6px 0 0);">Nov 12, 2021 5:22 PM</span>
<span class="t" style="left:866.40px;top:698.00px;font-size:11.4px;color:#333;transform:scaleX(1.0088);">08:36:17.407</span>
<span class="t" style="left:747.30px;top:720.00px;font-size:11.6px;color:#333;transform:scaleX(0.9733);clip-path:inset(0 4.6px 0 0);">Nov 13, 2021 3:06 PM</span>
<span class="t" style="left:866.40px;top:721.00px;font-size:11.4px;color:#333;transform:scaleX(1.0088);">01:23:48.328</span>
<span class="t" style="left:747.30px;top:744.00px;font-size:11.6px;color:#333;transform:scaleX(0.9733);clip-path:inset(0 4.6px 0 0);">Nov 13, 2021 6:05 PM</span>
<span class="t" style="left:702.30px;top:799.00px;font-size:11.6px;color:#333;transform:scaleX(0.9633);">Page:</span>
<span class="t" style="left:742.50px;top:799.00px;font-size:11.6px;color:#333;">1</span>
<span class="t" style="left:792.00px;top:799.00px;font-size:11.6px;color:#333;transform:scaleX(0.9772);">Show:</span>
<span class="t" style="left:836.50px;top:799.00px;font-size:11.6px;color:#333;">100</span>
<span class="t" style="left:1155.50px;top:799.00px;font-size:11px;color:#fff;font-weight:700;">1</span>
</div></body></html>
